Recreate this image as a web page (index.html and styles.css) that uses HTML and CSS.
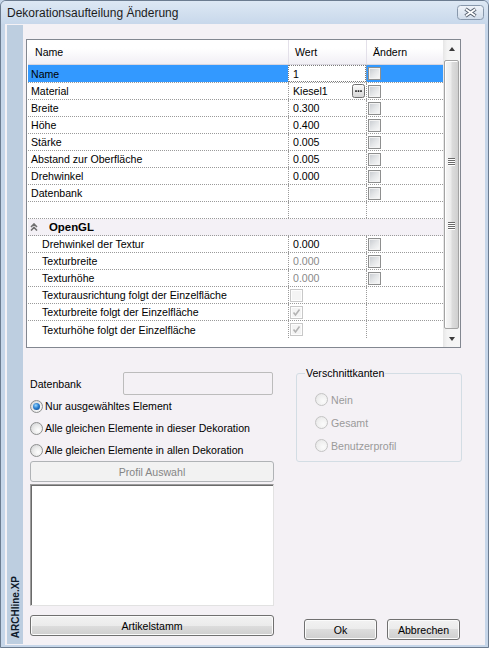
FILE: index.html
```html
<!DOCTYPE html>
<html lang="de">
<head>
<meta charset="utf-8">
<title>Dekorationsaufteilung Änderung</title>
<link rel="stylesheet" href="styles.css">
</head>
<body>
<div class="window">
  <div class="titlebar">
    <span class="title">Dekorationsaufteilung Änderung</span>
    <svg class="close" width="27" height="15" viewBox="0 0 27 15">
      <defs>
        <linearGradient id="cg" x1="0" y1="0" x2="0" y2="1">
          <stop offset="0" stop-color="#f0f4fa"/>
          <stop offset="1" stop-color="#d0dcea"/>
        </linearGradient>
      </defs>
      <rect x="0.5" y="0.5" width="26" height="14" rx="3" fill="url(#cg)" stroke="#8898ac"/>
      <path d="M8.5 4 L18.5 11 M18.5 4 L8.5 11" stroke="#5a6472" stroke-width="3.8" fill="none"/>
      <path d="M8.8 4.2 L18.2 10.8 M18.2 4.2 L8.8 10.8" stroke="#ffffff" stroke-width="1.7" fill="none"/>
    </svg>
  </div>
  <div class="client">
    <div class="sidebar"><span class="brand">ARCHline.XP</span></div>
    <div class="main">
      <div class="grid">
        <div class="gbody">
          <div class="head">
            <div>Name</div><div>Wert</div><div>Ändern</div>
          </div>
          <div class="row sel">
            <div class="c1">Name</div>
            <div class="c2 focus">1</div>
            <div class="c3"><span class="cb"></span></div>
          </div>
          <div class="row">
            <div class="c1">Material</div>
            <div class="c2 split">Kiesel1
              <svg class="more" width="13" height="14" viewBox="0 0 13 14">
                <defs>
                  <linearGradient id="mg" x1="0" y1="0" x2="0" y2="1">
                    <stop offset="0" stop-color="#fbfbfb"/>
                    <stop offset="1" stop-color="#d6d6d6"/>
                  </linearGradient>
                </defs>
                <rect x="0.5" y="0.5" width="12" height="13" rx="2" fill="url(#mg)" stroke="#6f6f6f"/>
                <rect x="3.2" y="6.3" width="1.6" height="1.6" fill="#111"/>
                <rect x="5.7" y="6.3" width="1.6" height="1.6" fill="#111"/>
                <rect x="8.2" y="6.3" width="1.6" height="1.6" fill="#111"/>
              </svg>
            </div>
            <div class="c3"><span class="cb"></span></div>
          </div>
          <div class="row"><div class="c1">Breite</div><div class="c2">0.300</div><div class="c3"><span class="cb"></span></div></div>
          <div class="row"><div class="c1">Höhe</div><div class="c2">0.400</div><div class="c3"><span class="cb"></span></div></div>
          <div class="row"><div class="c1">Stärke</div><div class="c2">0.005</div><div class="c3"><span class="cb"></span></div></div>
          <div class="row"><div class="c1">Abstand zur Oberfläche</div><div class="c2">0.005</div><div class="c3"><span class="cb"></span></div></div>
          <div class="row"><div class="c1">Drehwinkel</div><div class="c2">0.000</div><div class="c3"><span class="cb"></span></div></div>
          <div class="row"><div class="c1">Datenbank</div><div class="c2"></div><div class="c3"><span class="cb"></span></div></div>
          <div class="row"><div class="c1"></div><div class="c2"></div><div class="c3"></div></div>
          <div class="row group">
            <div class="gcell">
              <svg class="chev" width="8" height="8" viewBox="0 0 8 8">
                <path d="M1 4 L4 1 L7 4 M1 7.5 L4 4.5 L7 7.5" stroke="#6f6f6f" stroke-width="1.6" fill="none"/>
              </svg>
              <b>OpenGL</b>
            </div>
          </div>
          <div class="row sub"><div class="c1">Drehwinkel der Textur</div><div class="c2">0.000</div><div class="c3"><span class="cb"></span></div></div>
          <div class="row sub"><div class="c1">Texturbreite</div><div class="c2 dim">0.000</div><div class="c3"><span class="cb"></span></div></div>
          <div class="row sub"><div class="c1">Texturhöhe</div><div class="c2 dim">0.000</div><div class="c3"><span class="cb"></span></div></div>
          <div class="row sub"><div class="c1">Texturausrichtung folgt der Einzelfläche</div><div class="c2 cbcell"><span class="cb dis"></span></div><div class="c3"></div></div>
          <div class="row sub"><div class="c1">Texturbreite folgt der Einzelfläche</div><div class="c2 cbcell"><span class="cb dis"><svg width="11" height="11" viewBox="0 0 11 11"><path d="M2.5 5.5 L4.5 8 L8.5 2.5" stroke="#b3b3b3" stroke-width="1.6" fill="none"/></svg></span></div><div class="c3"></div></div>
          <div class="row sub last"><div class="c1">Texturhöhe folgt der Einzelfläche</div><div class="c2 cbcell"><span class="cb dis"><svg width="11" height="11" viewBox="0 0 11 11"><path d="M2.5 5.5 L4.5 8 L8.5 2.5" stroke="#b3b3b3" stroke-width="1.6" fill="none"/></svg></span></div><div class="c3"></div></div>
        </div>
        <div class="vscroll">
          <div class="sbbtn"><span class="arr up"></span></div>
          <div class="thumb"><span class="grip"></span><span class="grip"></span></div>
          <div class="sbbtn"><span class="arr down"></span></div>
        </div>
      </div>
      <div class="lower">
        <div class="left">
          <div class="dbrow"><span class="lbl">Datenbank</span><span class="tbox"></span></div>
          <div class="rrow"><span class="radio on"><span class="dot"></span></span>Nur ausgewähltes Element</div>
          <div class="rrow"><span class="radio"></span>Alle gleichen Elemente in dieser Dekoration</div>
          <div class="rrow"><span class="radio"></span>Alle gleichen Elemente in allen Dekoration</div>
          <div class="btn wide dis">Profil Auswahl</div>
          <div class="listbox"></div>
          <div class="btn wide art">Artikelstamm</div>
        </div>
        <div class="right">
          <fieldset class="gbox">
            <legend>Verschnittkanten</legend>
            <div class="gin">
              <div class="grow"><span class="radio off"></span>Nein</div>
              <div class="grow"><span class="radio off"></span>Gesamt</div>
              <div class="grow"><span class="radio off"></span>Benutzerprofil</div>
            </div>
          </fieldset>
          <div class="btns">
            <div class="btn sm">Ok</div>
            <div class="btn sm">Abbrechen</div>
          </div>
        </div>
      </div>
    </div>
  </div>
</div>
</body>
</html>
```

FILE: styles.css
```css
* { box-sizing: border-box; }
html, body { margin: 0; padding: 0; }
body {
  width: 489px;
  height: 648px;
  overflow: hidden;
  font-family: "Liberation Sans", Arial, sans-serif;
  font-size: 10.6px;
  color: #000;
  background: #c6d6e9;
}
.window {
  width: 489px;
  height: 648px;
  border: 1px solid #6c7c90;
  border-radius: 6px 6px 0 0;
  background: #c6d6e9;
  display: flex;
  flex-direction: column;
  overflow: hidden;
}
.titlebar {
  height: 23px;
  flex: none;
  display: flex;
  align-items: center;
  padding: 0 4px 0 6px;
  background: linear-gradient(#dde8f4, #c8d8eb);
}
.title { flex: 1; font-size: 12px; color: #1c1c1c; }
.close { display: block; flex: none; }

.client {
  flex: 1;
  margin: 0 3px 2px 4px;
  padding: 1px 0 1px 2px;
  background: #f4f1f5;
  display: flex;
}
.sidebar {
  width: 16px;
  flex: none;
  background: #bdcee0;
  display: flex;
  align-items: flex-end;
  justify-content: center;
  padding-bottom: 6px;
}
.brand {
  writing-mode: vertical-rl;
  transform: rotate(180deg);
  font-weight: bold;
  font-size: 10px;
  color: #0f1b2b;
}
.main {
  margin-left: 3px;
  width: 436px;
  display: flex;
  flex-direction: column;
}

/* property grid */
.grid {
  margin-top: 14px;
  width: 435px;
  height: 309px;
  flex: none;
  border: 1px solid #828790;
  background: #fff;
  display: flex;
}
.gbody { width: 416px; padding-left: 1px; flex: none; }
.head {
  height: 25px;
  display: grid;
  grid-template-columns: 260px 78px 77px;
  border-bottom: 1px solid #d9d6df;
  background: linear-gradient(#ffffff 35%, #f1eff5);
}
.head > div { display: flex; align-items: center; padding-left: 7px; }
.head > div + div { border-left: 1px solid #e3e0e9; padding-left: 6px; }

.row {
  height: 17px;
  display: grid;
  grid-template-columns: 260px 78px 77px;
  border-bottom: 1px dotted #9a9a9a;
}
.row.sel { height: 18px; }
.row.last { border-bottom: none; }
.row > div { display: flex; align-items: center; min-width: 0; white-space: nowrap; }
.row .c1 { padding-left: 3px; }
.row.sub .c1 { padding-left: 14px; }
.row .c2 { border-left: 1px dotted #9a9a9a; padding-left: 4px; }
.row .c3 { border-left: 1px dotted #9a9a9a; padding-left: 1px; }
.row .c2.cbcell { padding-left: 1px; }
.row .c2.split { justify-content: space-between; padding-right: 1px; }
.row .c2.dim { color: #8a8a8a; }
.row.sel .c1, .row.sel .c3 { background: #3399ff; }
.row.sel .c2 { outline: 1px dotted #7a7a7a; outline-offset: -1px; background: #fff; }
.more { display: block; }

.row.group { grid-template-columns: 1fr; background: #f4f1f6; }
.gcell { padding-left: 2px; }
.chev { display: block; margin-right: 11px; }
.gcell b { font-size: 11.4px; }

.cb {
  width: 13px;
  height: 13px;
  flex: none;
  border: 1px solid #8e8f8f;
  background: linear-gradient(135deg, #c5c9ce 0%, #e4e6e8 50%, #fbfbfb 100%);
  box-shadow: inset 0 0 0 1px #f3f3f3;
  display: flex;
  align-items: center;
  justify-content: center;
}
.cb.dis {
  border-color: #c8c8c8;
  background: #f4f4f4;
  box-shadow: inset 0 0 0 1px #fdfdfd;
}
.cb svg { display: block; }

/* scrollbar */
.vscroll {
  width: 17px;
  flex: none;
  display: flex;
  flex-direction: column;
  align-items: center;
  background: linear-gradient(to right, #e6e6e6, #f4f4f4 25%, #f6f6f6);
}
.sbbtn {
  width: 17px;
  height: 17px;
  flex: none;
  display: flex;
  align-items: center;
  justify-content: center;
}
.arr { width: 0; height: 0; border-left: 3.5px solid transparent; border-right: 3.5px solid transparent; }
.arr.up { border-bottom: 4px solid #3a3a3a; }
.arr.down { border-top: 4px solid #3a3a3a; }
.thumb {
  width: 15px;
  flex: 1;
  margin: 3px 0 1px;
  border: 1px solid #a3a3a3;
  border-radius: 2px;
  background: linear-gradient(to right, #f7f7f7, #ececec 45%, #dcdcdc 55%, #d0d0d0);
  box-shadow: inset 1px 1px 0 #ffffff;
  display: flex;
  flex-direction: column;
  align-items: center;
  padding-top: 97px;
  gap: 56px;
}
.grip {
  width: 7px;
  height: 8px;
  background: repeating-linear-gradient(#6a6a6a 0 1px, #ffffff 1px 2px);
}

/* lower area */
.lower { flex: 1; display: flex; }
.left { width: 244px; margin-left: 4px; display: flex; flex-direction: column; }
.dbrow { margin-top: 24px; height: 23px; display: flex; align-items: center; }
.lbl { width: 93px; }
.tbox {
  width: 150px;
  height: 23px;
  border: 1px solid #bcbcbc;
  border-radius: 2px;
  background: #f4f1f5;
}
.rrow { height: 22px; display: flex; align-items: center; white-space: nowrap; }
.radio {
  width: 13px;
  height: 13px;
  flex: none;
  margin-right: 2px;
  border-radius: 50%;
  border: 1px solid #8e8f8f;
  background: radial-gradient(circle at 65% 65%, #ffffff 0%, #e9e9e9 50%, #c9cbce 100%);
  display: flex;
  align-items: center;
  justify-content: center;
}
.radio .dot {
  width: 7px;
  height: 7px;
  border-radius: 50%;
  background: radial-gradient(circle at 40% 35%, #9ad8ff 0%, #2a7fd0 45%, #0b3f80 100%);
}
.radio.off {
  border-color: #c4c4c4;
  background: radial-gradient(circle at 65% 65%, #fbfbfb 0%, #eeeeee 60%, #dedede 100%);
  margin-right: 3px;
}
.btn {
  height: 21px;
  flex: none;
  display: flex;
  align-items: center;
  justify-content: center;
  border: 1px solid #707070;
  border-radius: 3px;
  background: linear-gradient(#f2f2f2 0%, #ebebeb 50%, #dddddd 50%, #cfcfcf 100%);
  box-shadow: inset 0 0 0 1px #fbfbfb;
}
.btn.wide { width: 244px; }
.btn.dis {
  border-color: #b0b3b6;
  background: #f2f2f2;
  box-shadow: none;
  color: #858585;
}
.btn.art { margin-top: 9px; }
.listbox {
  margin-top: 2px;
  width: 244px;
  height: 122px;
  flex: none;
  background: #fff;
  border: 1px solid;
  border-color: #9c9c9c #e2e2e2 #e2e2e2 #9c9c9c;
  box-shadow: inset 1px 1px 0 #6a6a6a;
}

.right { width: 166px; margin-left: 22px; display: flex; flex-direction: column; }
.gbox {
  margin: 19px 0 0 0;
  padding: 0;
  height: 95px;
  border: 1px solid #d3dde4;
  border-radius: 3px;
  min-width: 0;
}
.gbox legend {
  margin-left: 8px;
  padding: 0 1px;
  line-height: 13px;
}
.gin { padding: 8px 0 0 18px; }
.grow { height: 23px; display: flex; align-items: center; color: #9a9a9a; }
.btns {
  margin-top: auto;
  margin-bottom: 4px;
  margin-left: 8px;
  display: flex;
  gap: 10px;
}
.btn.sm { width: 73px; }
```
